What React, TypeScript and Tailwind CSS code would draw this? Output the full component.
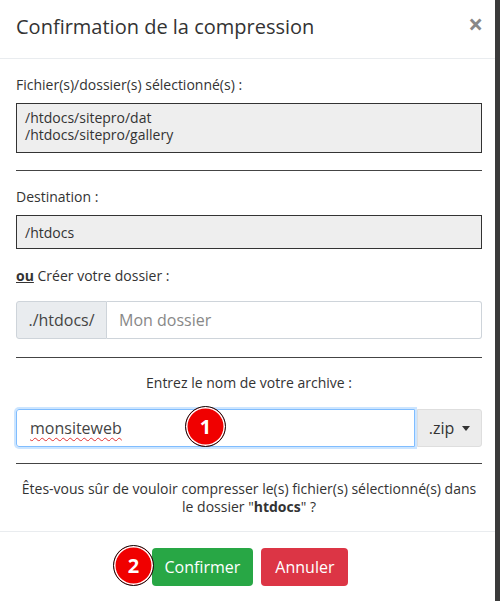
import React from 'react';

const font = { fontFamily: '"Open Sans", "Liberation Sans", sans-serif' };

function Marker({ n, className }: { n: number; className: string }) {
  return (
    <div
      className={`absolute flex h-[41px] w-[41px] items-center justify-center rounded-full border-[1.5px] border-[#111] bg-[#f00000] text-[20px] font-bold text-white shadow-[inset_0_0_0_1.5px_#fff] ${className}`}
    >
      {n}
    </div>
  );
}

export default function App() {
  return (
    <div className="flex h-[601px] w-[500px] overflow-hidden bg-[#3b3b3b] text-[#333]" style={font}>
      <div className="flex w-[495px] shrink-0 flex-col bg-white">
        {/* header */}
        <div className="flex h-[59px] items-start justify-between border-b border-[#e9ecef] pl-4 pr-[12px] pt-3">
          <h1 className="text-[20px] leading-[30px] text-[#333]">Confirmation de la compression</h1>
          <span className="mt-[-3px] text-[26px] font-bold leading-[30px] text-[#888]">×</span>
        </div>

        {/* body */}
        <div className="flex flex-col pl-4 pr-[13px] pt-[15px] text-[14px] leading-[21px]">
          <p className="mb-2">Fichier(s)/dossier(s) sélectionné(s) :</p>
          <div className="h-[50px] border border-[#333] bg-[#eeeeee] px-2 py-[5px] leading-[17px]">
            <div>/htdocs/sitepro/dat</div>
            <div>/htdocs/sitepro/gallery</div>
          </div>

          <hr className="mt-[17px] border-[#444]" />

          <p className="mt-[15px] mb-2">Destination :</p>
          <div className="flex h-[34px] items-center border border-[#333] bg-[#eeeeee] px-2">/htdocs</div>

          <p className="mt-[16px] mb-[15px]">
            <b className="underline">ou</b> Créer votre dossier :
          </p>
          <div className="flex h-[38px] text-[16px]">
            <div className="flex w-[91px] items-center justify-center rounded-l-[3px] border border-[#ced4da] bg-[#e9ecef] text-[#444]">
              ./htdocs/
            </div>
            <div className="flex flex-1 items-center rounded-r-[3px] border border-l-0 border-[#ced4da] px-3 text-[#888]">
              Mon dossier
            </div>
          </div>

          <hr className="mt-[18px] border-[#444]" />

          <p className="mt-[14px] text-center">Entrez le nom de votre archive :</p>
          <div className="relative mt-[16px] flex h-[38px] text-[16px]">
            <div className="flex w-[399px] items-center rounded-l-[3px] border border-[#80bdff] px-[13px] text-[#444] shadow-[0_0_0_2px_rgba(0,123,255,0.2)]">
              <span className="underline decoration-[#e03030] decoration-wavy decoration-1 underline-offset-[3px]">monsiteweb</span>
            </div>
            <div className="ml-[2px] flex flex-1 items-center justify-center gap-2 rounded-r-[3px] border border-[#dedede] bg-[#ececec] text-[#333]">
              .zip
              <span className="border-x-[4px] border-t-[5px] border-x-transparent border-t-[#333]" />
            </div>
            <Marker n={1} className="left-[169px] top-[-3px]" />
          </div>

          <hr className="mt-[16px] border-[#444]" />

          <p className="mt-[16px] text-center leading-[18px]">
            Êtes-vous sûr de vouloir compresser le(s) fichier(s) sélectionné(s) dans le dossier "<b>htdocs</b>" ?
          </p>
        </div>

        {/* footer */}
        <div className="relative mt-[15px] flex flex-1 justify-center gap-2 border-t border-[#e9ecef] pl-[5px] pt-[16px] text-[16px]">
          <button className="h-[38px] rounded-[4px] bg-[#28a745] px-[13px] text-white">Confirmer</button>
          <button className="h-[38px] rounded-[4px] bg-[#dc3545] px-[14px] text-white">Annuler</button>
          <Marker n={2} className="left-[113px] top-[13px]" />
        </div>
      </div>
      <div className="flex-1 bg-[#3b3b3b]" />
    </div>
  );
}
